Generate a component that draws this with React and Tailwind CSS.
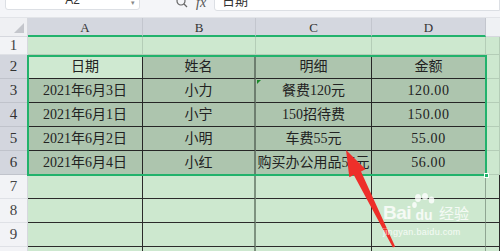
import React from "react";

const FONT = { fontFamily: '"Liberation Serif", "Noto Sans CJK SC", serif' };

function Cell({ className = "", children }) {
  return (
    <div
      className={`flex items-center justify-center shrink-0 h-full whitespace-nowrap text-[14px] text-[#222] border-r border-b ${className}`}
    >
      {children}
    </div>
  );
}

function RowHead({ n, sel }) {
  return (
    <div
      className={`w-[28px] shrink-0 h-full flex items-center justify-center text-[15px] border-r border-b ${
        sel
          ? "bg-[#d3d6de] text-[#333] border-r-[#c4c7cf] border-b-[#c0c3cb]"
          : "bg-[#f2f3f6] text-[#444] border-r-[#d6d8de] border-b-[#dfe1e6]"
      }`}
    >
      {n}
    </div>
  );
}

const dark = "bg-[#adc5ae] border-[#262626]";
const darkB = "bg-[#adc5ae] border-b-[#262626] border-r-2 border-r-[#6d7e6f]";
const lightBlack = "bg-[#cde8cf] border-[#2b2b2b]";
const lightBlackB = "bg-[#cde8cf] border-b-[#2b2b2b] border-r-2 border-r-[#7d927f]";
const eCell = "bg-[#cde8cf] border-[#b4cdb7] flex-1";

const data = [
  ["2021年6月3日", "小力", "餐费120元", "120.00"],
  ["2021年6月1日", "小宁", "150招待费", "150.00"],
  ["2021年6月2日", "小明", "车费55元", "55.00"],
  ["2021年6月4日", "小红", "购买办公用品55元", "56.00"],
];

export default function App() {
  return (
    <div className="w-[500px] h-[251px] overflow-hidden relative bg-[#f4f5f8]" style={FONT}>
      {/* toolbar */}
      <div className="h-[18px] flex items-start border-b border-[#e2e4e8]">
        <div className="ml-[5px] w-[135px] h-[18px] -mt-[8px] bg-white border border-[#dcdfe4] rounded-[3px] relative flex items-center justify-center text-[12px] text-[#333]">
          <span style={{ fontFamily: '"Liberation Sans", sans-serif' }} className="mt-[-2px]">A2</span>
          <span className="absolute right-[4px] top-[5px] text-[7px] text-[#888]">▾</span>
        </div>
        <div className="ml-[36px] mt-[-3px] flex items-center gap-[8px] text-[#555]">
          <svg width="12" height="11" viewBox="0 0 12 11" className="mt-[-1px]">
            <circle cx="5" cy="4" r="4" fill="none" stroke="#666" strokeWidth="1.2" />
            <line x1="8" y1="7" x2="11" y2="10" stroke="#666" strokeWidth="1.3" />
          </svg>
          <span className="italic text-[14px] leading-[12px] text-[#555]">fx</span>
        </div>
        <div className="ml-[8px] flex-1 h-[19px] -mt-[8px] bg-white border border-[#dcdfe4] rounded-l-[3px] flex items-center pl-[7px] text-[13px] text-[#333]">
          <span className="mt-[-1px]">日期</span>
        </div>
      </div>

      {/* column header */}
      <div className="flex h-[19px]">
        <div className="w-[28px] shrink-0 h-full bg-[#eff0f3] border-r border-b border-[#d6d8de] relative">
          <div className="absolute right-[3px] bottom-[3px] w-0 h-0 border-l-[10px] border-l-transparent border-b-[10px] border-b-[#c4c6cc]" />
        </div>
        {[
          ["A", "w-[115px]"],
          ["B", "w-[113px]"],
          ["C", "w-[116px]"],
          ["D", "w-[114px]"],
        ].map(([l, w]) => (
          <div
            key={l}
            className={`${w} shrink-0 h-full bg-[#d4d7df] border-r border-r-[#c3c6ce] border-b-2 border-b-[#22b26c] flex items-center justify-center text-[13px] text-[#333] pt-[2px]`}
          >
            {l}
          </div>
        ))}
        <div className="flex-1 h-full bg-[#eff1f4] border-b border-[#d6d8de]" />
      </div>

      {/* row 1 */}
      <div className="flex h-[18px]">
        <RowHead n="1" />
        <Cell className="w-[115px] bg-[#cde8cf] border-[#b4cdb7]" />
        <Cell className="w-[113px] bg-[#cde8cf] border-[#b4cdb7]" />
        <Cell className="w-[116px] bg-[#cde8cf] border-[#b4cdb7]" />
        <Cell className="w-[114px] bg-[#cde8cf] border-[#b4cdb7]" />
        <Cell className={eCell} />
      </div>

      {/* row 2 */}
      <div className="flex h-[24px]">
        <RowHead n="2" sel />
        <Cell className="w-[115px] bg-[#cfe9d1] border-[#262626]">日期</Cell>
        <Cell className={`w-[113px] ${darkB}`}>姓名</Cell>
        <Cell className={`w-[116px] ${dark}`}>明细</Cell>
        <Cell className={`w-[114px] ${dark}`}>金额</Cell>
        <Cell className={eCell} />
      </div>

      {data.map((r, i) => (
        <div key={i} className="flex h-[24px]">
          <RowHead n={String(i + 3)} sel />
          <Cell className={`w-[115px] ${dark}`}>{r[0]}</Cell>
          <Cell className={`w-[113px] ${darkB}`}>{r[1]}</Cell>
          <Cell className={`w-[116px] ${dark}`}>{r[2]}</Cell>
          <Cell className={`w-[114px] ${dark}`}>
            <span className="tracking-[0.6px]">{r[3]}</span>
          </Cell>
          <Cell className={eCell} />
        </div>
      ))}

      {["7", "8", "9", "10"].map((n) => (
        <div key={n} className="flex h-[24px]">
          <RowHead n={n} />
          <Cell className={`w-[115px] ${lightBlack}`} />
          <Cell className={`w-[113px] ${lightBlackB}`} />
          <Cell className={`w-[116px] ${lightBlack}`} />
          <Cell className={`w-[114px] ${lightBlack} border-r-[#8fa592]`} />
          <Cell className="flex-1 bg-[#cde8cf] border-[#2b2b2b]" />
        </div>
      ))}

      {/* selection border */}
      <div className="absolute left-[27px] top-[55px] w-[460px] h-[121px] border-2 border-[#22b26c] pointer-events-none" />
      {/* fill handle */}
      <div className="absolute left-[484px] top-[173px] w-[5px] h-[5px] bg-[#22b26c] border border-white" />
      {/* error triangle */}
      <div className="absolute left-[257px] top-[80px] w-0 h-0 border-t-[4px] border-t-[#1a8a2a] border-r-[4px] border-r-transparent" />

      {/* red arrow */}
      <svg className="absolute left-0 top-0 pointer-events-none" width="500" height="251">
        <polygon
          points="346,150 365.5,169.3 361,171.5 395.1,246.5 392.9,247.5 353.8,175.1 349.3,177.3"
          fill="#ee2f2a"
        />
      </svg>

      {/* watermark */}
      <div
        className="absolute left-[383px] top-[193px] flex flex-col text-white/80 pointer-events-none"
        style={{ fontFamily: '"Liberation Sans", "Noto Sans CJK SC", sans-serif' }}
      >
        <div className="flex items-end h-[30px]">
          <span className="text-[19px] leading-[20px] font-bold tracking-[-0.5px]">Bai</span>
          <div className="relative w-[26px] h-[30px] flex items-end justify-center">
            <svg className="absolute left-[1px] top-0" width="24" height="18" viewBox="0 0 24 18">
              <ellipse cx="6" cy="5" rx="3" ry="4" fill="white" fillOpacity="0.8" />
              <ellipse cx="13" cy="3.5" rx="3" ry="3.5" fill="white" fillOpacity="0.8" />
              <ellipse cx="19.5" cy="7" rx="2.8" ry="3.5" fill="white" fillOpacity="0.8" />
              <ellipse cx="2.5" cy="12" rx="2.3" ry="3" fill="white" fillOpacity="0.8" />
            </svg>
            <span className="text-[14px] leading-[16px] font-bold relative">du</span>
          </div>
          <span className="text-[15px] leading-[18px] ml-[2px]">经验</span>
        </div>
        <span className="text-[9px] leading-[10px] mt-[4px] tracking-[0.3px]">jingyan.baidu.com</span>
      </div>
    </div>
  );
}
